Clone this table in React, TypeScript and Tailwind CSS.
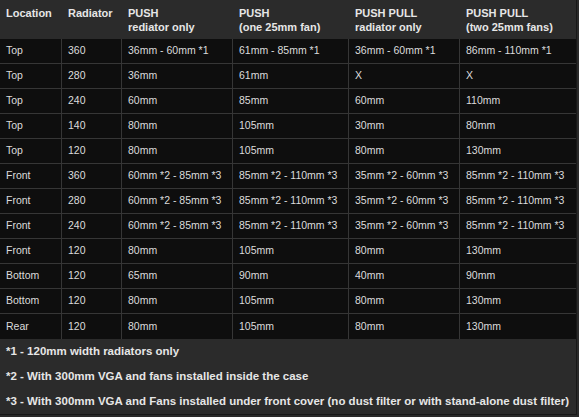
const headers: [string, string?][] = [
  ["Location"],
  ["Radiator"],
  ["PUSH", "rediator only"],
  ["PUSH", "(one 25mm fan)"],
  ["PUSH PULL", "radiator only"],
  ["PUSH PULL", "(two 25mm fans)"],
];

const widths = ["w-[62px]", "w-[60px]", "w-[111px]", "w-[116px]", "w-[111px]", "w-[117px]"];

const rows: string[][] = [
  ["Top", "360", "36mm - 60mm *1", "61mm - 85mm *1", "36mm - 60mm *1", "86mm - 110mm *1"],
  ["Top", "280", "36mm", "61mm", "X", "X"],
  ["Top", "240", "60mm", "85mm", "60mm", "110mm"],
  ["Top", "140", "80mm", "105mm", "30mm", "80mm"],
  ["Top", "120", "80mm", "105mm", "80mm", "130mm"],
  ["Front", "360", "60mm *2 - 85mm *3", "85mm *2 - 110mm *3", "35mm *2 - 60mm *3", "85mm *2 - 110mm *3"],
  ["Front", "280", "60mm *2 - 85mm *3", "85mm *2 - 110mm *3", "35mm *2 - 60mm *3", "85mm *2 - 110mm *3"],
  ["Front", "240", "60mm *2 - 85mm *3", "85mm *2 - 110mm *3", "35mm *2 - 60mm *3", "85mm *2 - 110mm *3"],
  ["Front", "120", "80mm", "105mm", "80mm", "130mm"],
  ["Bottom", "120", "65mm", "90mm", "40mm", "90mm"],
  ["Bottom", "120", "80mm", "105mm", "80mm", "130mm"],
  ["Rear", "120", "80mm", "105mm", "80mm", "130mm"],
];

const notes = [
  "*1 - 120mm width radiators only",
  "*2 - With 300mm VGA and fans installed inside the case",
  "*3 - With 300mm VGA and Fans installed under front cover (no dust filter or with stand-alone dust filter)",
];

export default function App() {
  return (
    <div className="w-[579px] h-[417px] bg-[#2a2a2a] font-['Liberation_Sans',Arial,sans-serif] overflow-hidden">
      <div className="w-[577px] border-r border-b border-[#181818]">
        {/* header */}
        <div className="flex h-[39px] bg-[#2b2b2b] text-[#e6e6e6] text-[11px] font-bold leading-[14px]">
          {headers.map(([a, b], i) => (
            <div key={i} className={`${widths[i]} shrink-0 pl-[6px] pt-[6px]`}>
              <div>{a}</div>
              {b && <div>{b}</div>}
            </div>
          ))}
        </div>

        {/* body */}
        <div className="bg-[#0e0e0e] text-[#dcdcdc] text-[10.5px]">
          {rows.map((row, r) => (
            <div key={r} className="flex h-[25px] border-b border-[#363636] last:border-b-0">
              {row.map((cell, c) => (
                <div
                  key={c}
                  className={`${widths[c]} shrink-0 pl-[6px] flex items-center whitespace-nowrap ${
                    c < 5 ? "border-r border-[#363636]" : ""
                  }`}
                >
                  {cell}
                </div>
              ))}
            </div>
          ))}
        </div>

        {/* notes */}
        <div className="bg-[#2b2b2b] text-[#e6e6e6] text-[11.5px] font-bold">
          {notes.map((n, i) => (
            <div key={i} className="h-[25px] pl-[6px] flex items-center whitespace-nowrap">
              {n}
            </div>
          ))}
        </div>
      </div>
    </div>
  );
}
